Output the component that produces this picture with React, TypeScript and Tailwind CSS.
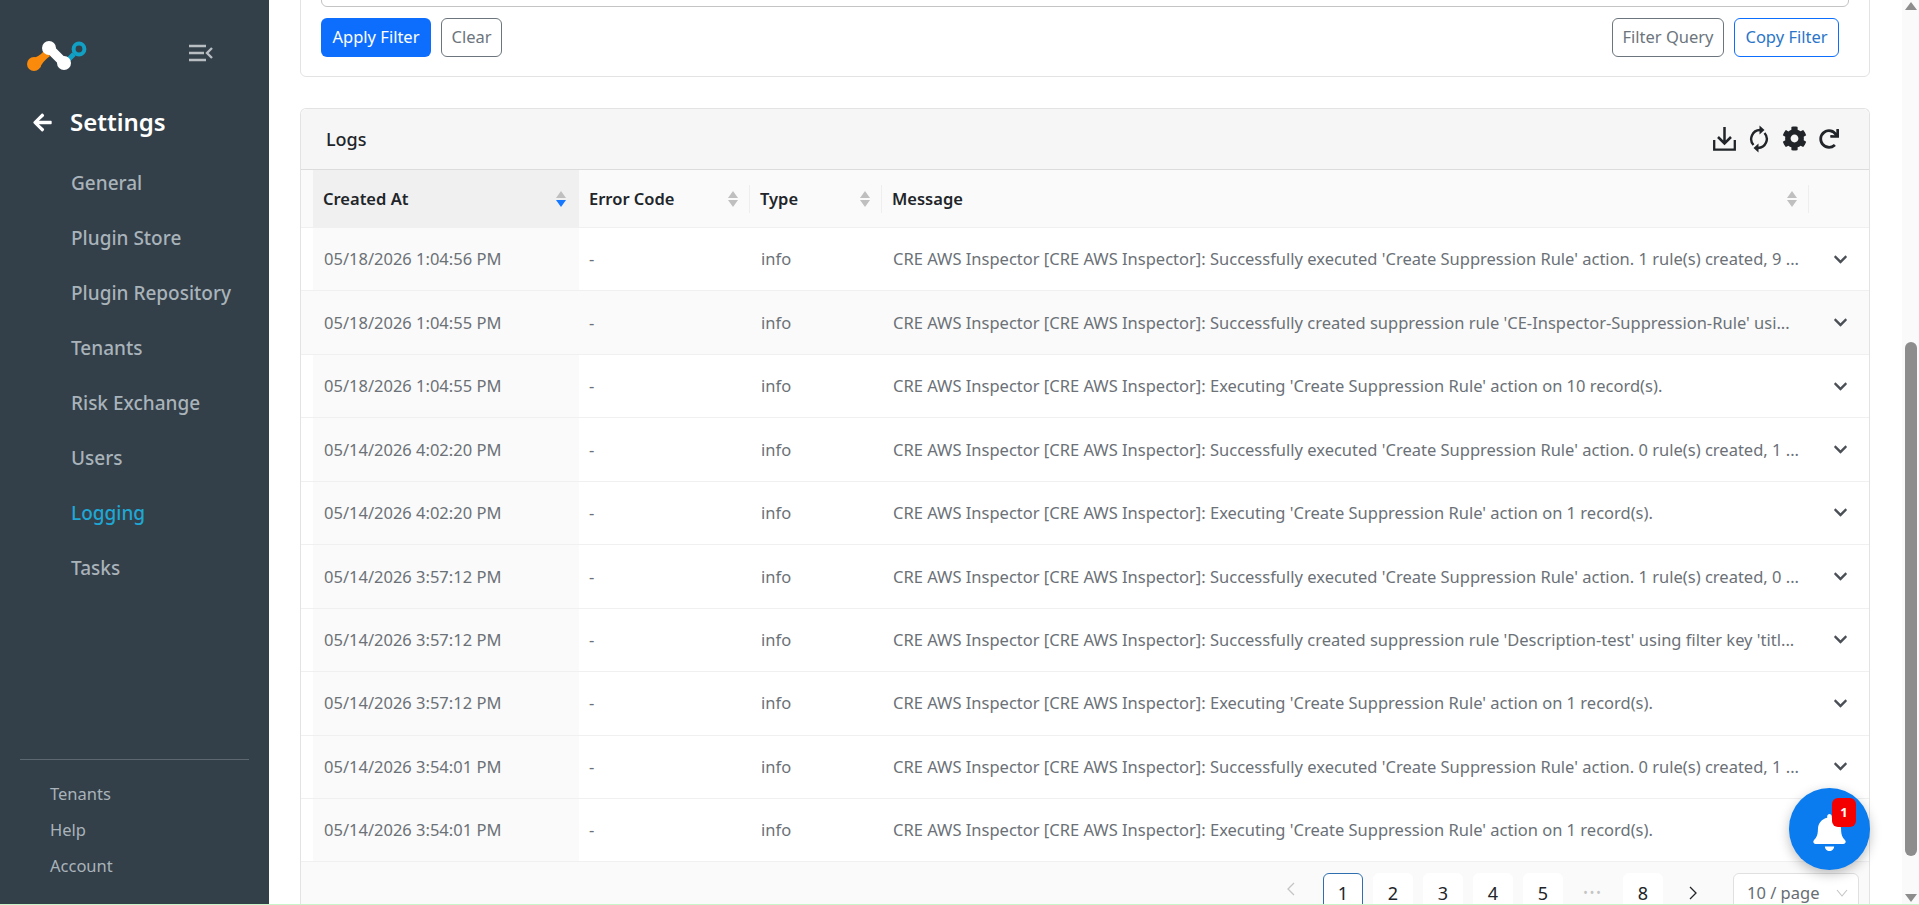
import React from "react";
import { FaBell, FaCog, FaRedo, FaChevronDown, FaArrowLeft } from "react-icons/fa";

const nav = ["General", "Plugin Store", "Plugin Repository", "Tenants", "Risk Exchange", "Users", "Logging", "Tasks"];
const P = "CRE AWS Inspector [CRE AWS Inspector]: ";
const rows: [string, string][] = [
  ["05/18/2026 1:04:56 PM", "Successfully executed 'Create Suppression Rule' action. 1 rule(s) created, 9 ..."],
  ["05/18/2026 1:04:55 PM", "Successfully created suppression rule 'CE-Inspector-Suppression-Rule' usi..."],
  ["05/18/2026 1:04:55 PM", "Executing 'Create Suppression Rule' action on 10 record(s)."],
  ["05/14/2026 4:02:20 PM", "Successfully executed 'Create Suppression Rule' action. 0 rule(s) created, 1 ..."],
  ["05/14/2026 4:02:20 PM", "Executing 'Create Suppression Rule' action on 1 record(s)."],
  ["05/14/2026 3:57:12 PM", "Successfully executed 'Create Suppression Rule' action. 1 rule(s) created, 0 ..."],
  ["05/14/2026 3:57:12 PM", "Successfully created suppression rule 'Description-test' using filter key 'titl..."],
  ["05/14/2026 3:57:12 PM", "Executing 'Create Suppression Rule' action on 1 record(s)."],
  ["05/14/2026 3:54:01 PM", "Successfully executed 'Create Suppression Rule' action. 0 rule(s) created, 1 ..."],
  ["05/14/2026 3:54:01 PM", "Executing 'Create Suppression Rule' action on 1 record(s)."],
];

function Sort({ active }: { active?: boolean }) {
  return (
    <svg width="10" height="16" viewBox="0 0 10 16" className="shrink-0">
      <path d="M5 0 L10 7 L0 7 Z" fill="#bfbfbf" />
      <path d="M0 9 L10 9 L5 16 Z" fill={active ? "#1677ff" : "#bfbfbf"} />
    </svg>
  );
}

function Logo() {
  return (
    <svg width="80" height="50" viewBox="20 30 80 50" className="shrink-0">
      <circle cx="34" cy="64" r="7" fill="#f98a0b" />
      <path d="M30 59 Q38 58 45 50 L50 56 Q42 62 40 68 Z" fill="#f98a0b" />
      <path d="M68 60 L74 54" stroke="#129fc4" strokeWidth="5" />
      <circle cx="79" cy="49" r="5.4" fill="none" stroke="#129fc4" strokeWidth="4" />
      <circle cx="49" cy="48" r="7" fill="#ffffff" />
      <circle cx="64" cy="63" r="7" fill="#ffffff" />
      <path d="M49 48 L64 63" stroke="#ffffff" strokeWidth="9.5" />
    </svg>
  );
}

function Toggle() {
  return (
    <svg width="24" height="18" viewBox="0 0 24 18" className="shrink-0">
      <path d="M0 2 H17 M0 9 H15 M0 16 H17" stroke="#b9bec2" strokeWidth="2.6" />
      <path d="M23 4 L18 9 L23 14" stroke="#b9bec2" strokeWidth="2.4" fill="none" />
    </svg>
  );
}

function Download() {
  return (
    <svg width="23" height="24" viewBox="0 0 23 24" className="shrink-0">
      <path d="M1.2 13 V22.6 H21.8 V13" stroke="#212529" strokeWidth="2.3" fill="none" />
      <path d="M11.5 0 V16 M5 10 L11.5 16.5 L18 10" stroke="#212529" strokeWidth="2.5" fill="none" />
    </svg>
  );
}

function Sync() {
  return (
    <svg width="20" height="28" viewBox="0 0 20 28" className="shrink-0">
      <path d="M11 5 A9 9 0 0 0 4.5 20" stroke="#212529" strokeWidth="2.4" fill="none" />
      <path d="M9 23 A9 9 0 0 0 15.5 8" stroke="#212529" strokeWidth="2.4" fill="none" />
      <path d="M10.5 0.5 L15.5 5 L10.5 9.5 Z" fill="#212529" />
      <path d="M9.5 18.5 L4.5 23 L9.5 27.5 Z" fill="#212529" />
    </svg>
  );
}

function Head({ w, label, active, sep, cls }: { w: string; label: string; active?: boolean; sep?: boolean; cls?: string }) {
  return (
    <div className={`${w} ${cls ?? ""} relative flex items-center justify-between pl-[10px] pt-[1px] h-full font-semibold text-[#212529] ${active ? "pr-[13px]" : "pr-[12px]"}`}>
      <span>{label}</span>
      <Sort active={active} />
      {sep && <span className="absolute right-0 top-[15px] h-[28px] w-px bg-[#eeeeee]" />}
    </div>
  );
}

export default function App() {
  return (
    <div className="flex flex-col h-[905px] w-[1919px] overflow-hidden bg-white text-[16.5px]" style={{ fontFamily: '"Noto Sans", sans-serif' }}>
      <div className="flex h-[904px]">
        <aside className="w-[269px] shrink-0 bg-[#333f49] flex flex-col">
          <div className="flex items-center pl-[20px] pt-[30px] h-[80px]">
            <Logo />
            <div className="ml-[89px] -mt-[4px]"><Toggle /></div>
          </div>
          <div className="flex items-center pl-[32px] mt-[24px] h-[36px]">
            <FaArrowLeft className="text-white w-[21px] h-[21px]" />
            <span className="ml-[17px] text-[24px] font-semibold text-white">Settings</span>
          </div>
          <nav className="flex flex-col mt-[16px] pl-[71px]">
            {nav.map((n) => (
              <div key={n} className={`h-[55px] flex items-center text-[19px] font-medium ${n === "Logging" ? "text-[#1fa7d4]" : "text-[#a9b3ba]"}`}>{n}</div>
            ))}
          </nav>
          <div className="mt-auto mx-[20px] border-t border-[#5c6770] pt-[16px] pb-[20px] pl-[30px] flex flex-col text-[#a9b3ba]">
            <div className="h-[36px] flex items-center">Tenants</div>
            <div className="h-[36px] flex items-center">Help</div>
            <div className="h-[36px] flex items-center">Account</div>
          </div>
        </aside>

        <main className="flex-1 min-w-0 pl-[31px] pr-[32px] overflow-hidden">
          <section className="-mt-[40px] border border-[#e3e3e3] rounded-md pt-[5px] pl-[20px] pr-[20px] pb-[19px] h-[117px] flex flex-col">
            <div className="h-[41px] shrink-0 border border-[#c4c4c4] rounded-md" />
            <div className="flex items-center justify-between mt-[11px] pr-[10px]">
              <div className="flex gap-[10px]">
                <button className="h-[39px] w-[110px] rounded-md bg-[#0d6efd] text-white">Apply Filter</button>
                <button className="h-[39px] w-[61px] rounded-md border border-[#6c757d] text-[#6c757d]">Clear</button>
              </div>
              <div className="flex gap-[10px]">
                <button className="h-[39px] w-[112px] rounded-md border border-[#6c757d] text-[#6c757d]">Filter Query</button>
                <button className="h-[39px] w-[105px] rounded-md border border-[#0d6efd] text-[#2a75c9]">Copy Filter</button>
              </div>
            </div>
          </section>

          <section className="mt-[31px] border-x border-t border-[#e3e3e3] rounded-t-md">
            <div className="h-[61px] bg-[#f6f6f6] border-b border-[#dcdcdc] rounded-t-md flex items-center pl-[25px] pr-[30px]">
              <span className="text-[18px] font-medium text-[#212529]">Logs</span>
              <div className="ml-auto flex items-center -mt-[1px]">
                <Download />
                <div className="ml-[13px]"><Sync /></div>
                <FaCog className="ml-[13px] w-[25px] h-[25px] text-[#212529]" />
                <FaRedo className="ml-[12px] w-[20px] h-[20px] text-[#212529]" />
              </div>
            </div>
            <div className="flex h-[58px] pl-[12px] bg-[#fafafa] border-b border-[#f0f0f0]">
              <Head w="w-[266px]" label="Created At" active cls="bg-[#f0f0f0]" />
              <Head w="w-[171px]" label="Error Code" sep />
              <Head w="w-[132px]" label="Type" sep />
              <Head w="w-[927px]" label="Message" sep />
            </div>
            {rows.map(([date, msg], i) => (
              <div key={i} className={`flex items-center h-[63.45px] pl-[12px] border-b border-[#f0f0f0] text-[#6b7177] ${i === 1 ? "bg-[#fafafa]" : "bg-white"}`}>
                <div className="w-[266px] h-full flex items-center pl-[11px] pt-[1px] bg-[#fafafa]">{date}</div>
                <div className="w-[171px] pl-[10px] pt-[1px]">-</div>
                <div className="w-[132px] pl-[11px] pt-[1px]">info</div>
                <div className="w-[926px] pl-[11px] pr-[8px] pt-[1px] whitespace-nowrap overflow-hidden">{P + msg}</div>
                <div className="flex-1 flex justify-center pl-[3px]"><FaChevronDown className="w-[15px] h-[15px] text-[#4a5056]" /></div>
              </div>
            ))}
            <div className="h-[42px] bg-[#fafafa] pt-[11px] flex items-start text-[#212529]">
              <span className="w-[1px]" />
              <div className="ml-[984px] flex items-center h-[32px]">
                <svg width="10" height="14" viewBox="0 0 10 14"><path d="M8 1 L2 7 L8 13" stroke="#c4c4c4" strokeWidth="1.3" fill="none" /></svg>
              </div>
              <div className="ml-[27px] w-[40px] h-[40px] rounded-md border border-[#2f6fb0] bg-white flex items-center justify-center text-[18px]">1</div>
              {["2", "3", "4", "5"].map((p) => (
                <div key={p} className="ml-[10px] w-[40px] h-[40px] rounded-md bg-white flex items-center justify-center text-[18px]">{p}</div>
              ))}
              <div className="ml-[10px] w-[40px] h-[40px] flex items-center justify-center text-[#c4c4c4] tracking-[2px] text-[12px]">•••</div>
              <div className="ml-[10px] w-[40px] h-[40px] rounded-md bg-white flex items-center justify-center text-[18px]">8</div>
              <div className="ml-[10px] w-[40px] h-[40px] flex items-center justify-center">
                <svg width="10" height="14" viewBox="0 0 10 14"><path d="M2 1 L8 7 L2 13" stroke="#212529" strokeWidth="1.3" fill="none" /></svg>
              </div>
              <div className="ml-[20px] w-[126px] h-[40px] rounded-md border border-[#e0e0e0] bg-white flex items-center justify-between pl-[13px] pr-[10px] text-[#666d73]">
                <span>10 / page</span>
                <svg width="12" height="8" viewBox="0 0 12 8"><path d="M1 1 L6 7 L11 1" stroke="#c4c4c4" strokeWidth="1.1" fill="none" /></svg>
              </div>
            </div>
          </section>
        </main>

        <div className="w-[17px] shrink-0 bg-[#fafafa] flex flex-col items-center justify-between pb-[2px] pt-[2px]">
          <svg width="12" height="8" viewBox="0 0 12 8"><path d="M6 0 L12 8 L0 8 Z" fill="#8d8d8d" /></svg>
          <div className="w-[12px] h-[515px] rounded-full bg-[#8d8d8d] mt-[332px] mb-[38px]" />
          <svg width="12" height="8" viewBox="0 0 12 8"><path d="M0 0 L12 0 L6 8 Z" fill="#8d8d8d" /></svg>
        </div>
      </div>
      <div className="h-px shrink-0 bg-[#c9f3c9]" />

      <div className="fixed right-[49px] bottom-[35px] w-[81px] h-[82px] rounded-full bg-[#0a7cf0] shadow-[0_4px_12px_rgba(0,0,0,0.25)] flex items-center justify-center">
        <FaBell className="w-[33px] h-[37px] text-white -ml-[1px] mt-[6px]" />
        <span className="absolute left-[43px] top-[10px] w-[24px] h-[29px] rounded-md bg-[#f40000] text-white text-[13px] font-bold flex items-center justify-center">1</span>
      </div>
    </div>
  );
}
